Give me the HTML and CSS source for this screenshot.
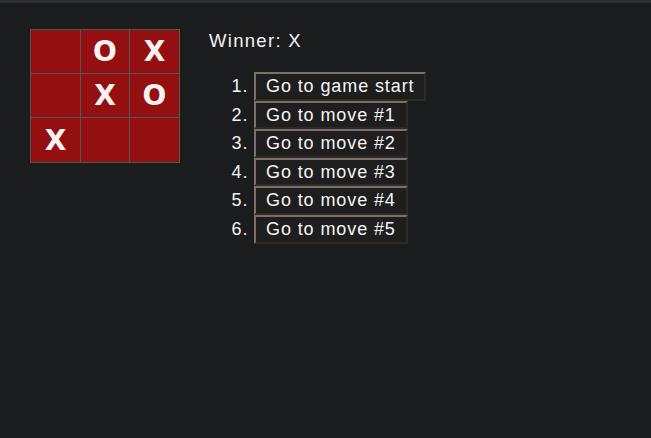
FILE: index.html
```html
<!DOCTYPE html>
<html>
<head>
<meta charset="utf-8">
<link rel="stylesheet" href="styles.css">
</head>
<body>
<div class="topbar"></div>
<div class="game">
  <div class="board">
    <div class="cell"></div>
    <div class="cell">O</div>
    <div class="cell">X</div>
    <div class="cell"></div>
    <div class="cell">X</div>
    <div class="cell">O</div>
    <div class="cell">X</div>
    <div class="cell"></div>
    <div class="cell"></div>
  </div>
  <div class="info">
    <div class="status">Winner: X</div>
    <ol class="moves">
      <li><button class="move">Go to game start</button></li>
      <li><button class="move">Go to move #1</button></li>
      <li><button class="move">Go to move #2</button></li>
      <li><button class="move">Go to move #3</button></li>
      <li><button class="move">Go to move #4</button></li>
      <li><button class="move">Go to move #5</button></li>
    </ol>
  </div>
</div>
</body>
</html>
```
FILE: styles.css
```css
html, body {
  margin: 0;
  padding: 0;
  background: #1b1c1e;
  color: #f2f2f2;
  font-family: "Liberation Sans", Arial, sans-serif;
  font-size: 18px;
}
.topbar {
  height: 3px;
  background: #2e2f32;
}
.game {
  display: flex;
  align-items: flex-start;
  padding: 26px 0 0 30px;
  gap: 29px;
}
.board {
  display: grid;
  grid-template-columns: 49px 48px 49px;
  grid-template-rows: 43px 43px 44px;
  gap: 1px;
  padding: 1px;
  background: #50565a;
}
.cell {
  background: #941010;
  color: #f7f3f3;
  font-family: "DejaVu Sans", sans-serif;
  font-weight: bold;
  font-size: 28px;
  display: flex;
  align-items: center;
  justify-content: center;
}
.info {
  padding-top: 1px;
}
.status {
  font-size: 18.5px;
  letter-spacing: 1.3px;
}
.moves {
  margin: 20px 0 0 0;
  padding-left: 45px;
  letter-spacing: 0.8px;
}
.moves li {
  line-height: 20.6px;
}
.move {
  font-family: "Liberation Sans", Arial, sans-serif;
  font-size: 18px;
  line-height: 20.6px;
  letter-spacing: 0.9px;
  color: #f5f5f5;
  background: #1e1e1e;
  border: 2px solid;
  border-color: #7b7065 #2e2a26 #2e2a26 #7b7065;
  padding: 2px 10px;
  margin: 0;
}
```
